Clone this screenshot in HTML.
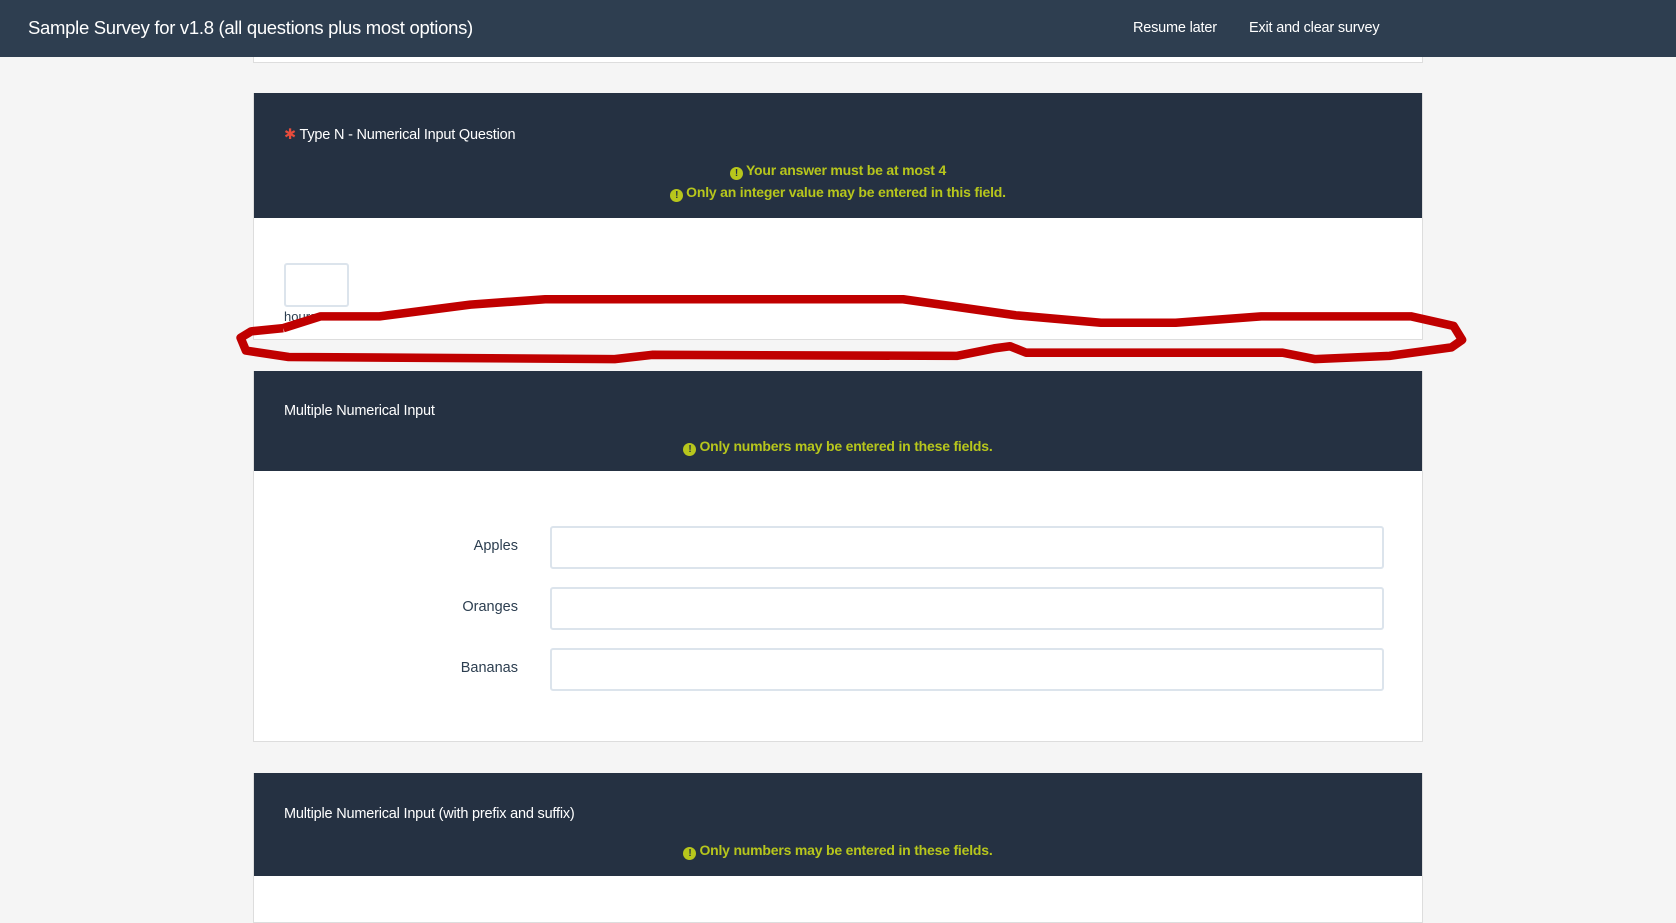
<!DOCTYPE html>
<html><head><meta charset="utf-8"><style>
*{box-sizing:border-box;margin:0;padding:0}
body{width:1676px;height:917px;overflow:hidden;background:#f5f5f5;font-family:"Liberation Sans",sans-serif;position:relative;color:#2c3e50}
.nav{position:absolute;left:0;top:0;width:1676px;height:57px;background:#2e3e50;color:#fff}
.nav .t{position:absolute;left:28px;top:17px;font-size:18.5px;letter-spacing:-0.3px}
.nav .l{position:absolute;top:20px;font-size:14.5px;letter-spacing:-0.2px}
.card{position:absolute;left:253px;width:1170px;background:#fff;border:1px solid #ddd;border-top:none}
.hd{background:#253142;color:#fff;position:relative}
.q{position:absolute;left:30px;font-size:14.5px;letter-spacing:-0.2px}
.w{position:absolute;left:0;width:100%;text-align:center;color:#b7c61c;font-weight:bold;font-size:14px;letter-spacing:-0.2px}
.w i{display:inline-block;width:13px;height:13px;border-radius:50%;background:#b7c61c;color:#253142;font-style:normal;font-size:10px;line-height:13px;vertical-align:-1px;margin-right:3px}
.lab{position:absolute;font-size:14.5px;left:0;width:264px;text-align:right;color:#2c3e50}
.inp{position:absolute;left:296px;width:834px;height:43px;border:2px solid #dce4ec;border-radius:3px}
</style></head><body>
<div class="nav"><div class="t">Sample Survey for v1.8 (all questions plus most options)</div>
<div class="l" style="left:1133px">Resume later</div><div class="l" style="left:1249px">Exit and clear survey</div></div>
<div class="card" style="top:57px;height:6px"></div>

<div class="card" style="top:93px;height:247px">
<div class="hd" style="height:125px">
<div class="q" style="top:34px"><span style="color:#e74c3c">✱</span> Type N - Numerical Input Question</div>
<div class="w" style="top:69px"><i>!</i>Your answer must be at most 4</div>
<div class="w" style="top:91px"><i>!</i>Only an integer value may be entered in this field.</div>
</div>
<div style="position:absolute;left:30px;top:170px;width:65px;height:44px;border:2px solid #dce4ec;border-radius:3px"></div>
<div style="position:absolute;left:30px;top:216px;font-size:13px">hours</div>
</div>

<div class="card" style="top:371px;height:371px">
<div class="hd" style="height:100px">
<div class="q" style="top:32px">Multiple Numerical Input</div>
<div class="w" style="top:67px"><i>!</i>Only numbers may be entered in these fields.</div>
</div>
<div class="lab" style="top:167px">Apples</div>
<div class="inp" style="top:155px"></div>
<div class="lab" style="top:228px">Oranges</div>
<div class="inp" style="top:216px"></div>
<div class="lab" style="top:289px">Bananas</div>
<div class="inp" style="top:277px"></div>
</div>

<div class="card" style="top:773px;height:150px">
<div class="hd" style="height:103px">
<div class="q" style="top:33px">Multiple Numerical Input (with prefix and suffix)</div>
<div class="w" style="top:69px"><i>!</i>Only numbers may be entered in these fields.</div>
</div></div>

<svg style="position:absolute;left:0;top:0" width="1676" height="917" viewBox="0 0 1568 858">
<polyline fill="none" stroke="#c00000" stroke-width="8" stroke-linejoin="round" points="265,307 300,296 355,296 440,285 510,280 845,280 950,295 1030,302 1100,302 1180,296 1320,296 1360,305 1368,318 1358,325 1300,333 1230,336 1200,330 960,330 945,324 930,326 895,333 610,332 575,336 270,334 230,328 225,316 235,310 265,307"/>
</svg>
</body></html>
